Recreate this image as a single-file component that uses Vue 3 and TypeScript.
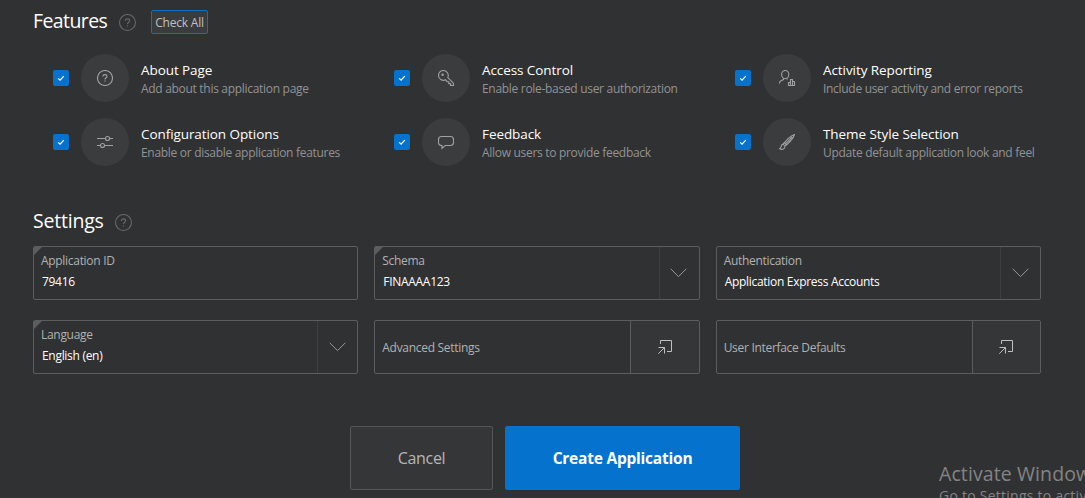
<script setup lang="ts">
type IconName = 'help' | 'key' | 'report' | 'sliders' | 'comment' | 'brush'

interface Feature {
  title: string
  description: string
  icon: IconName
}

interface Field {
  label: string
  value?: string
  required?: boolean
  control?: 'select' | 'popup'
}

const features: Feature[] = [
  { title: 'About Page', description: 'Add about this application page', icon: 'help' },
  { title: 'Access Control', description: 'Enable role-based user authorization', icon: 'key' },
  { title: 'Activity Reporting', description: 'Include user activity and error reports', icon: 'report' },
  { title: 'Configuration Options', description: 'Enable or disable application features', icon: 'sliders' },
  { title: 'Feedback', description: 'Allow users to provide feedback', icon: 'comment' },
  { title: 'Theme Style Selection', description: 'Update default application look and feel', icon: 'brush' },
]

const fields: Field[] = [
  { label: 'Application ID', value: '79416', required: true },
  { label: 'Schema', value: 'FINAAAA123', required: true, control: 'select' },
  { label: 'Authentication', value: 'Application Express Accounts', control: 'select' },
  { label: 'Language', value: 'English (en)', required: true, control: 'select' },
  { label: 'Advanced Settings', control: 'popup' },
  { label: 'User Interface Defaults', control: 'popup' },
]
</script>

<template>
  <main class="page">
    <header class="heading">
      <h2>Features</h2>
      <svg class="help" viewBox="0 0 16 16">
        <circle cx="8" cy="8" r="7.5" />
        <path d="M6 6.5C6 5.2 6.8 4.6 8 4.6s2 .7 2 1.7c0 1.5-2 1.5-2 3.2M8 10.6v1.2" />
      </svg>
      <button class="check-all">Check All</button>
    </header>

    <ul class="features">
      <li v-for="f in features" :key="f.title" class="feature">
        <span class="checkbox">
          <svg viewBox="0 0 16 16"><path d="M5.2 8.4l1.9 1.7 3.7-4" /></svg>
        </span>
        <span class="badge">
          <svg viewBox="0 0 16 16">
            <template v-if="f.icon === 'help'">
              <circle cx="8" cy="8" r="7.5" />
              <path d="M6 6.5C6 5.2 6.8 4.6 8 4.6s2 .7 2 1.7c0 1.5-2 1.5-2 3.2M8 10.6v1.2" />
            </template>
            <template v-else-if="f.icon === 'key'">
              <path d="M9.8 7.6 15.5 13.2V15.5H12.6V13.6H10.8V11.7H9.1L7.6 9.8C4.2 11.4.5 8.9.5 5.4.5 2.6 2.7.5 5.3.5 8.8.5 11.3 4.2 9.8 7.6Z" />
              <circle cx="4.6" cy="4.8" r=".7" />
            </template>
            <template v-else-if="f.icon === 'report'">
              <ellipse cx="6.2" cy="4.6" rx="3.6" ry="4.1" />
              <path d="M4.5 8.3V9.6L1.9 10.7Q.5 11.5.5 13.5M8 8.3 8.3 9.5" />
              <path d="M9.5 15.5V12.5H11.5V9.5H13.5V11.5H15.5V15.5ZM11.5 12.5V15.5M13.5 11.5V15.5" />
            </template>
            <template v-else-if="f.icon === 'sliders'">
              <path d="M0 4.5H8.5M12.5 4.5H16M0 11.5H3.5M7.5 11.5H16" />
              <circle cx="10.5" cy="4.5" r="2" />
              <circle cx="5.5" cy="11.5" r="2" />
            </template>
            <template v-else-if="f.icon === 'comment'">
              <path d="M3.5 2.5H12.5Q15.5 2.5 15.5 5.5V8.5Q15.5 11.5 12.5 11.5H7.2L4 14.3V11.5Q.5 11.5.5 8.5V5.5Q.5 2.5 3.5 2.5Z" />
            </template>
            <template v-else>
              <path d="M15.5.5Q12 1.8 9.3 4.3L5.3 8.7 7.5 10.9 12 6.5Q14.5 3.7 15.5.5ZM13.2 3 6.4 9.8M5.3 8.7 4 10.1 6 12.1 7.5 10.9M4 10.1Q2.2 10.5 2.2 12.5 1.9 14 .6 14.5 2.3 15.9 4.5 15 6 14.2 6 12.1" />
            </template>
          </svg>
        </span>
        <span class="feature-text">
          <strong>{{ f.title }}</strong>
          <span>{{ f.description }}</span>
        </span>
      </li>
    </ul>

    <header class="heading settings-heading">
      <h2>Settings</h2>
      <svg class="help" viewBox="0 0 16 16">
        <circle cx="8" cy="8" r="7.5" />
        <path d="M6 6.5C6 5.2 6.8 4.6 8 4.6s2 .7 2 1.7c0 1.5-2 1.5-2 3.2M8 10.6v1.2" />
      </svg>
    </header>

    <section class="fields">
      <div v-for="f in fields" :key="f.label" class="field" :class="{ required: f.required }">
        <div class="field-body" :class="{ filled: f.value }">
          <label>{{ f.label }}</label>
          <span v-if="f.value" class="value">{{ f.value }}</span>
        </div>
        <span v-if="f.control === 'select'" class="select-arrow">
          <svg viewBox="0 0 17 10"><path d="M.7.8 8.5 8.6 16.3.8" /></svg>
        </span>
        <span v-else-if="f.control === 'popup'" class="popup-button">
          <svg viewBox="0 0 16 16">
            <path d="M3.5 5V1.5H14.5V12.5H10M1.5 8.5H7.5V14.5M7.5 8.5 1.3 14.7" />
          </svg>
        </span>
      </div>
    </section>

    <footer class="actions">
      <button class="cancel">Cancel</button>
      <button class="create">Create Application</button>
    </footer>

    <aside class="watermark">
      <div class="watermark-title">Activate Windows</div>
      <div class="watermark-text">Go to Settings to activate Windows.</div>
    </aside>
  </main>
</template>

<style>
body {
  margin: 0;
  background: #303133;
}
</style>

<style scoped>
.page {
  position: relative;
  box-sizing: border-box;
  width: 1085px;
  height: 498px;
  padding: 10px 44px 0 33px;
  overflow: hidden;
  background: #303133;
  color: #fff;
  font-family: 'Segoe UI', 'Open Sans', 'Noto Sans', sans-serif;
}

.page svg {
  display: block;
  fill: none;
  stroke: currentColor;
  stroke-width: 1;
}

button {
  box-sizing: border-box;
  padding: 0;
  border-radius: 2px;
  font-family: inherit;
}

.heading {
  display: flex;
  align-items: center;
  height: 24px;
}

h2 {
  width: 74px;
  margin: -2px 0 0;
  font-size: 19.5px;
  font-weight: 400;
  line-height: 24px;
  letter-spacing: -0.6px;
  white-space: nowrap;
}

.help {
  width: 17px;
  height: 17px;
  margin-left: 12px;
  color: #68696b;
}

.check-all {
  width: 57px;
  height: 24px;
  margin-left: 15px;
  border: 1px solid #0572ce;
  background: #3a3b3d;
  color: #bfc0c1;
  font-size: 12px;
  letter-spacing: -0.2px;
  white-space: nowrap;
}

.features {
  display: grid;
  grid-template-columns: repeat(3, 341px);
  row-gap: 16px;
  margin: 20px -15px 0 0;
  padding: 0;
  list-style: none;
}

.feature {
  display: flex;
  align-items: center;
  height: 48px;
  padding-left: 20px;
}

.checkbox {
  width: 16px;
  height: 16px;
  border-radius: 2px;
  background: #0572ce;
}

.checkbox svg {
  width: 16px;
  height: 16px;
  stroke-width: 1.2;
}

.badge {
  display: flex;
  align-items: center;
  justify-content: center;
  width: 48px;
  height: 48px;
  margin: 0 12px;
  border-radius: 50%;
  background: #3b3c3e;
  color: #a0a1a2;
}

.badge svg {
  width: 16px;
  height: 16px;
  stroke-width: 1.1;
}

.feature-text {
  display: flex;
  flex-direction: column;
  padding-top: 2px;
  white-space: nowrap;
}

.feature-text strong {
  font-size: 13.5px;
  font-weight: 400;
  line-height: 20px;
  letter-spacing: -0.08px;
}

.feature-text span {
  color: #929394;
  font-size: 12px;
  line-height: 18px;
  letter-spacing: -0.3px;
}

.settings-heading {
  margin-top: 44px;
}

.settings-heading h2 {
  width: 70px;
  letter-spacing: -0.2px;
}

.fields {
  display: grid;
  grid-template-columns: repeat(3, 1fr);
  grid-auto-rows: 54px;
  gap: 20px 16px;
  margin-top: 12px;
}

.field {
  position: relative;
  display: flex;
  box-sizing: border-box;
  overflow: hidden;
  border: 1px solid #5c5d5f;
  border-radius: 2px;
}

.required::before {
  position: absolute;
  top: 0;
  left: 0;
  border-top: 8px solid #5c5d5f;
  border-right: 8px solid transparent;
  content: '';
}

.field-body {
  display: flex;
  flex: 1;
  flex-direction: column;
  justify-content: center;
  padding: 2px 0 0 7px;
  white-space: nowrap;
}

.field-body.filled {
  padding: 0 0 2px 7px;
}

.field-body label {
  color: #b0b1b2;
  font-size: 12px;
  line-height: 20px;
  letter-spacing: -0.3px;
}

.value {
  padding-left: 1px;
  font-size: 12px;
  line-height: 22px;
  letter-spacing: -0.3px;
}

.select-arrow,
.popup-button {
  display: flex;
  align-items: center;
  justify-content: center;
}

.select-arrow {
  box-sizing: border-box;
  width: 40px;
  padding-right: 0.5px;
  border-left: 1px solid #3e3f41;
  color: #97989a;
}

.select-arrow svg {
  width: 17px;
  height: 10px;
}

.popup-button {
  width: 67.2px;
  border-left: 1px solid #5c5d5f;
  background: #353638;
  color: #bfc0c1;
}

.popup-button svg {
  width: 16px;
  height: 16px;
}

.actions {
  display: flex;
  gap: 12px;
  margin: 52px 0 0 317px;
}

.actions button {
  height: 64px;
  font-size: 16px;
}

.actions .cancel {
  width: 143px;
  border: 1px solid #555658;
  background: #353638;
  color: #b5b6b7;
  letter-spacing: -0.3px;
}

.actions .create {
  width: 235px;
  border: 0;
  background: #0572ce;
  color: #fff;
  font-size: 15.5px;
  font-weight: 700;
  letter-spacing: -0.22px;
}

.watermark {
  position: absolute;
  top: 461px;
  left: 939px;
  color: #838485;
  white-space: nowrap;
}

.watermark-title {
  font-size: 19.5px;
  line-height: 25px;
  letter-spacing: 0.1px;
}

.watermark-text {
  font-size: 14px;
  line-height: 20px;
  letter-spacing: 0.25px;
}
</style>
